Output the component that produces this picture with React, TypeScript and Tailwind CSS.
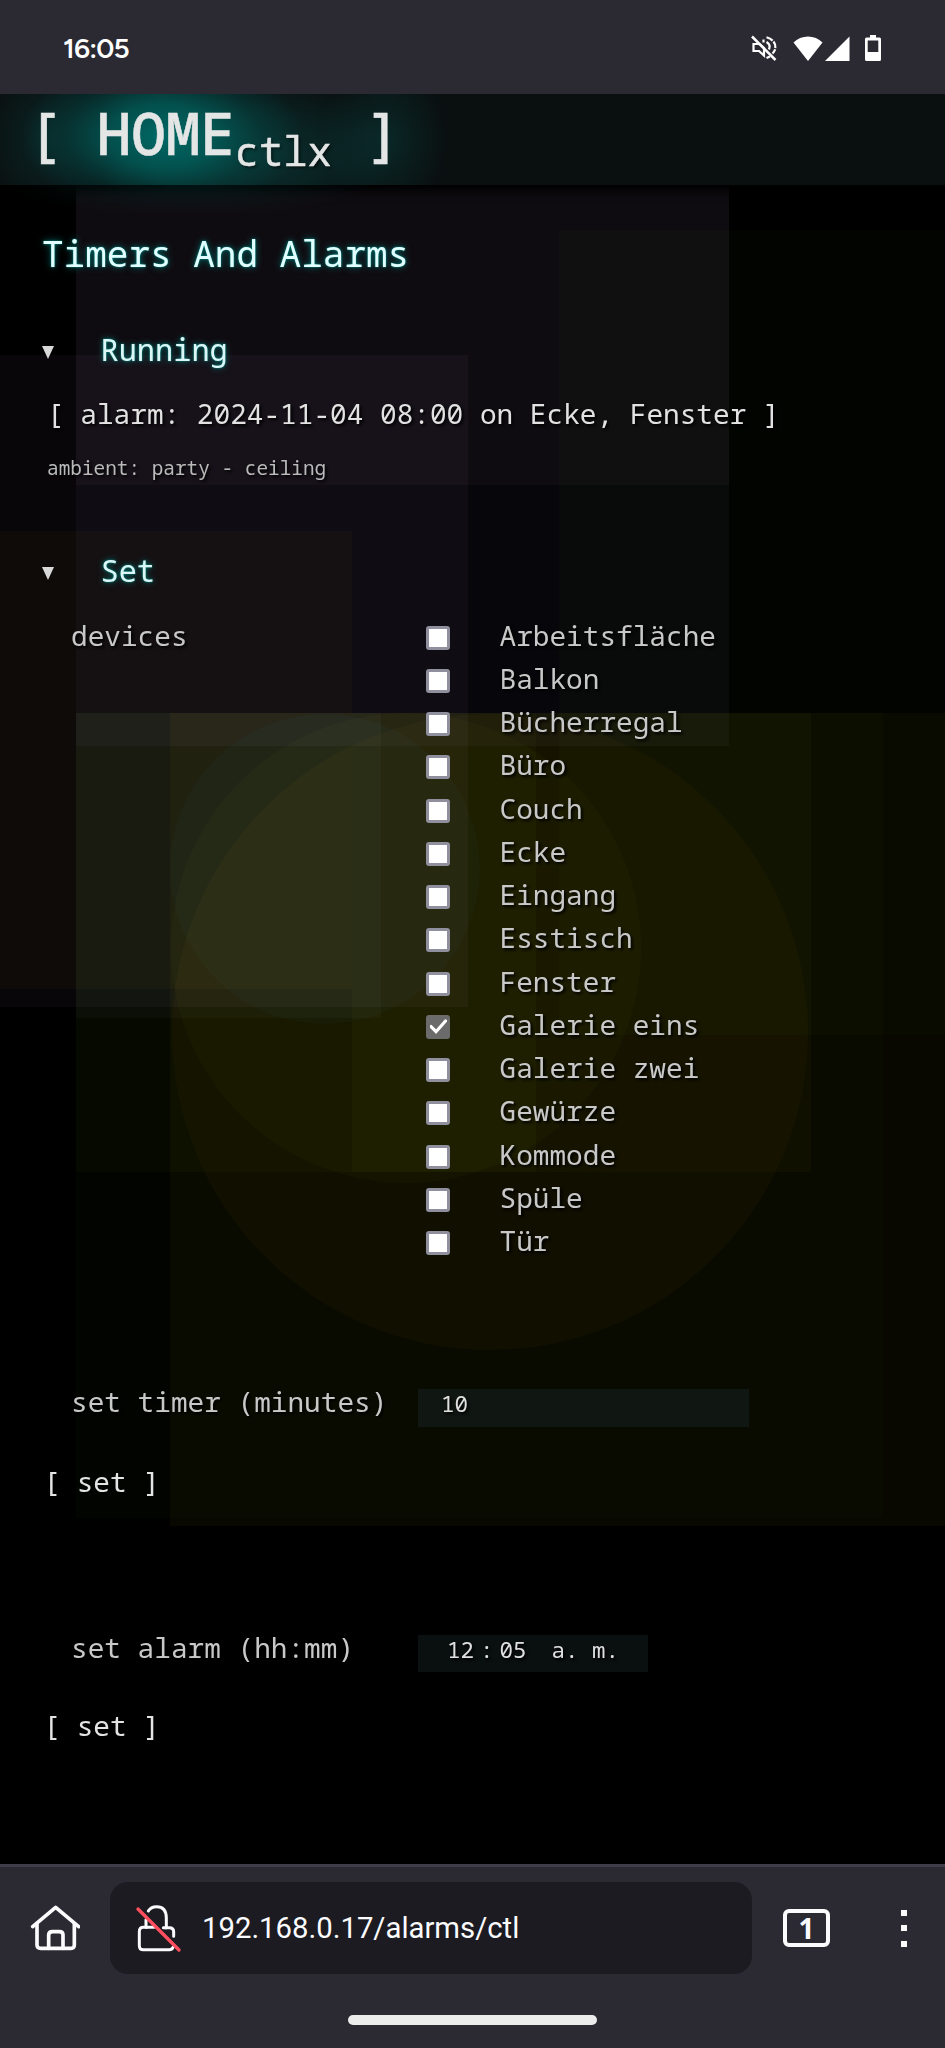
const DEVICES = [
  "Arbeitsfläche",
  "Balkon",
  "Bücherregal",
  "Büro",
  "Couch",
  "Ecke",
  "Eingang",
  "Esstisch",
  "Fenster",
  "Galerie eins",
  "Galerie zwei",
  "Gewürze",
  "Kommode",
  "Spüle",
  "Tür",
];

const SELECTED = "Galerie eins";

/* Overlapping translucent shapes; each one adds its light to those beneath. */
function Backdrop() {
  return (
    <svg
      className="absolute inset-0 h-full w-full [&>*]:mix-blend-plus-lighter"
      viewBox="0 94 945 1770"
      preserveAspectRatio="none"
      aria-hidden="true"
    >
      <rect x="76" y="94" width="653" height="391" fill="#080607" />
      <rect x="76" y="94" width="653" height="652" fill="#07060a" />
      <rect x="0" y="355" width="468" height="652" fill="#080609" />
      <rect x="559" y="230" width="386" height="805" fill="#020400" />
      <rect x="0" y="531" width="352" height="458" fill="#060500" />
      <rect x="76" y="713" width="807" height="805" fill="#020400" />
      <rect x="170" y="713" width="775" height="813" fill="#080700" />
      <rect x="76" y="713" width="460" height="459" fill="#040500" />
      <rect x="352" y="713" width="459" height="459" fill="#050500" />
      <rect x="76" y="713" width="305" height="305" fill="#050607" />
      <circle cx="490" cy="1032" r="318" fill="#070400" />
      <circle cx="406" cy="948" r="235" fill="#040500" />
      <circle cx="325" cy="869" r="155" fill="#000406" />
    </svg>
  );
}

function StatusBar() {
  return (
    <div className="relative z-20 flex h-[94px] shrink-0 items-center bg-[#2b2a33] pl-[63px] pr-[64px] text-white">
      <span className="mt-[1px] font-['Figtree','Inter',sans-serif] text-[28px] font-semibold leading-none tracking-[-0.8px]">
        16:05
      </span>
      <div className="ml-auto flex items-center pt-[2px]">
        <svg className="h-[26px] w-[26px]" viewBox="0 0 26 26" fill="none" stroke="currentColor" strokeWidth="2.2">
          <path d="M1 1.5 L24.5 25" strokeWidth="2.500" />
          <path d="M5 9 H2.5 V16 H8 L13 20.5 V13 L8.500 9Z" />
          <path d="M12.500 4.500 V7.500" />
          <path d="M15.500 2.300 C25.500 5 26.500 14 21.500 18.500" strokeDasharray="7 1.2" />
          <path d="M15.500 7 C19 9 19 12 18 14.500" />
          <path d="M15.500 23 L19 21.500" />
        </svg>
        <svg className="ml-[16px] h-[25px] w-[30px]" viewBox="0 0 30 25" fill="currentColor">
          <path d="M0.500 6.500 C8 -1.500 22 -1.500 29.500 6.500 L15 25Z" />
        </svg>
        <svg className="ml-[2px] h-[25px] w-[25px]" viewBox="0 0 25 25" fill="currentColor">
          <path d="M24.500 0.500 V25 H0Z" />
        </svg>
        <svg className="ml-[15px] h-[26px] w-[16px]" viewBox="0 0 16 26" fill="currentColor">
          <path
            fillRule="evenodd"
            d="M5 0 H11 V2.500 H14.500 Q16 2.500 16 4 V24.500 Q16 26 14.500 26 H1.500 Q0 26 0 24.500 V4 Q0 2.500 1.500 2.500 H5Z M2.700 5.500 V17 H13.300 V5.500Z"
          />
        </svg>
      </div>
    </div>
  );
}

function Wordmark() {
  return (
    <header className="relative z-10 h-[91px] shrink-0 bg-[#0a0f10] bg-[radial-gradient(ellipse_140px_84px_at_162px_42px,#006e6aee_0%,#006864b8_38%,#005c5850_70%,#005c5800_100%),radial-gradient(ellipse_130px_80px_at_265px_62px,#0a4a4880_0%,#0a444258_50%,#0a444200_100%),radial-gradient(ellipse_64px_80px_at_46px_46px,#0a484660_0%,#0a484600_100%),radial-gradient(ellipse_64px_80px_at_384px_46px,#0a484670_0%,#0a484600_100%)] shadow-[0_2px_10px_4px_#000]">
      <h1 className="whitespace-pre pl-[27.5px] text-[57.6px] font-medium leading-[77px] text-[#e4e6e6] [-webkit-text-stroke:0.5px_#e4e6e6]">
        <span>[ </span>
        <span>HOME</span>
        <span className="align-[-10.6px] text-[40.4px] font-normal leading-[0] [text-shadow:2px_2px_3px_#00000090]">
          ctlx
        </span>
        <span> ]</span>
      </h1>
      <div className="absolute left-0 top-[91px] h-[36px] w-[430px] bg-[radial-gradient(ellipse_180px_30px_at_190px_0px,#00504c38_0%,#00504c00_100%)]" />
    </header>
  );
}

function Summary({ children }: { children: string }) {
  return (
    <div className="flex h-[40px] items-center">
      <svg className="ml-[42px] mt-[4px] h-[13px] w-[12px]" viewBox="0 0 12 13" fill="#d8d8d8">
        <path d="M0 0 H12 L6 13Z" />
      </svg>
      <h3 className="ml-[46.5px] text-[30.3px] leading-[40px] text-[#dcf6f6] [text-shadow:0_0_2px_#009a96,0_0_6px_#007470]">
        {children}
      </h3>
    </div>
  );
}

function Checkbox({ checked }: { checked: boolean }) {
  return checked ? (
    <span className="mt-[12px] flex h-[24px] w-[24px] items-center justify-center rounded-[3px] bg-[#6b6b6b]">
      <svg className="h-[16px] w-[17px]" viewBox="0 0 17 16" fill="none" stroke="#fff" strokeWidth="3.200">
        <path d="M1 7.500 L6 12.700 L15.500 2" strokeLinecap="round" />
      </svg>
    </span>
  ) : (
    <span className="mt-[12px] h-[24px] w-[24px] rounded-[3px] border-[3px] border-[#8f8f9d] bg-white" />
  );
}

function SetButton() {
  return (
    <button className="block h-[40px] whitespace-pre pl-[43.5px] text-[27.7px] leading-[40px] text-[#e4e4e4]">
      [ set ]
    </button>
  );
}

function BrowserBar() {
  return (
    <div className="relative z-20 flex h-[184px] shrink-0 flex-col border-t-[3px] border-[#3f3e48] bg-[#2b2a33] text-[#fbfbfe]">
      <div className="mt-[15px] flex h-[92px] items-center">
        <svg
          className="ml-[30px] h-[50px] w-[50px]"
          viewBox="90 160 150 150"
          fill="none"
          stroke="currentColor"
          strokeWidth="11"
          strokeLinecap="round"
          strokeLinejoin="round"
        >
          <path d="M98 231 L167 173 L236 231" />
          <path d="M111 222 V286 Q111 296 122 296 H213 Q223 296 223 286 V222" />
          <path d="M146 296 V256 Q146 246 158 246 H178 Q189 246 189 256 V296" />
        </svg>
        <div className="ml-[30px] flex h-[92px] w-[642px] items-center rounded-[18px] bg-[#1c1b22]">
          <svg
            className="ml-[25px] h-[50px] w-[49px]"
            viewBox="405 160 147 150"
            fill="none"
            stroke="currentColor"
            strokeWidth="9"
            strokeLinecap="round"
          >
            <path d="M445 184 Q452 171 470 171 Q499 171 499 205 V234 H508 Q521 234 521 246 V260" />
            <path d="M438 210 V233 H430 Q418 233 418 246 V288 Q418 300 430 300 H508 Q516 300 519 293" />
            <path d="M438 233 H462 M490 234 H499" />
            <path d="M414 178 L537 301" stroke="#ff4f5e" strokeWidth="10" />
          </svg>
          <span className="ml-[18px] mt-[2px] font-['Roboto',sans-serif] text-[29.3px] leading-none">
            192.168.0.17/alarms/ctl
          </span>
        </div>
        <div className="ml-[31px] flex h-[38px] w-[47px] items-center justify-center rounded-[6px] border-[4px] border-[#fbfbfe] font-['Noto_Sans',sans-serif] text-[28px] font-bold leading-none">
          1
        </div>
        <div className="ml-[71px] flex flex-col gap-[9.500px]">
          <span className="h-[6px] w-[6px] bg-[#fbfbfe]" />
          <span className="h-[6px] w-[6px] bg-[#fbfbfe]" />
          <span className="h-[6px] w-[6px] bg-[#fbfbfe]" />
        </div>
      </div>
      <div className="mx-auto mt-[41px] h-[10px] w-[249px] rounded-full bg-[#ececec]" />
    </div>
  );
}

export default function App() {
  return (
    <div className="flex h-[2048px] w-[945px] flex-col overflow-hidden bg-black">
      <StatusBar />
      <div className="relative isolate flex h-[1770px] shrink-0 flex-col overflow-hidden bg-black font-['Noto_Sans_Mono','DejaVu_Sans_Mono',monospace]">
        <Backdrop />
        <Wordmark />
        <main className="relative [text-shadow:2px_2px_3px_#000]">
          <h2 className="mt-[45px] h-[48px] pl-[42px] text-[36px] leading-[48px] text-[#e2ffff] [text-shadow:0_0_2px_#009a96,0_0_7px_#007470]">
            Timers And Alarms
          </h2>

          <section className="mt-[52px]">
            <Summary>Running</Summary>
            <p className="mt-[23px] h-[40px] whitespace-pre pl-[47px] text-[27.75px] leading-[40px] text-[#e2e2e2]">
              [ alarm: 2024-11-04 08:00 on Ecke, Fenster ]
            </p>
            <p className="mt-[21px] h-[28px] pl-[47px] text-[19.4px] leading-[28px] text-[#bababa]">
              ambient: party - ceiling
            </p>
          </section>

          <section className="mt-[69px] text-[27.75px] text-[#c8c8c8]">
            <Summary>Set</Summary>
            <div className="mt-[22.7px] flex pl-[71px] leading-[43.26px]">
              <span className="w-[355px]">devices</span>
              <ul>
                {DEVICES.map((name) => (
                  <li key={name} className="flex h-[43.26px] items-start">
                    <Checkbox checked={name === SELECTED} />
                    <span className="ml-[49.5px]">{name}</span>
                  </li>
                ))}
              </ul>
            </div>

            <div className="mt-[118.4px] flex h-[46px] pl-[71px] leading-[40px]">
              <span className="w-[347px]">set timer (minutes)</span>
              <span className="mt-[8px] h-[38px] w-[331px] bg-[#101713] pl-[23px] text-[22.5px] leading-[30px] text-[#e0e0e0]">
                10
              </span>
            </div>
            <div className="mt-[34px]">
              <SetButton />
            </div>

            <div className="mt-[126px] flex h-[45px] pl-[71px] leading-[40px]">
              <span className="w-[347px]">set alarm (hh:mm)</span>
              <span className="mt-[8px] flex h-[37px] w-[230px] bg-[#0a0f10] pl-[29px] text-[22.5px] leading-[30px] text-[#e0e0e0]">
                <span>12</span>
                <span className="mx-[6px]">:</span>
                <span>05</span>
                <span className="ml-[25px]">a. m.</span>
              </span>
            </div>
            <div className="mt-[33px]">
              <SetButton />
            </div>
          </section>
        </main>
      </div>
      <BrowserBar />
    </div>
  );
}
